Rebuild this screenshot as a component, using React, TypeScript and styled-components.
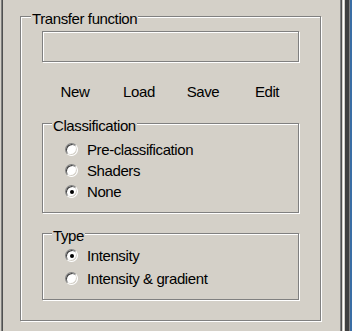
import React from "react";
import styled, { createGlobalStyle } from "styled-components";

const Global = createGlobalStyle`
  html, body { margin: 0; padding: 0; background: #d4d0c8; }
  body { font-family: "Liberation Sans", Arial, sans-serif; }
`;

const Window = styled.div`
  width: 352px;
  height: 331px;
  display: flex;
  background: #d4d0c8;
  overflow: hidden;
  font-family: "Liberation Sans", Arial, sans-serif;
  font-size: 15px;
  letter-spacing: -0.4px;
  color: #000;
`;

const LeftEdge = styled.div`
  width: 3px;
  flex: none;
  background: linear-gradient(to right, #d4d0c8 0 1px, #808080 1px 2px, #505050 2px 3px);
`;

const RightEdge = styled.div`
  width: 12px;
  flex: none;
  background: linear-gradient(
    to right,
    #808080 0 1px,
    #505050 1px 2px,
    #d4d0c8 2px 3px,
    #ffffff 3px 4px,
    #d4d0c8 4px 5px,
    #404040 5px 9px,
    #808080 9px 10px,
    #3a6ea5 10px 12px
  );
`;

const Main = styled.div`
  flex: 1;
  padding: 16px 0 0 17px;
`;

const GroupBox = styled.div<{ $height?: number; $padTop: number; $padX: number }>`
  position: relative;
  box-sizing: border-box;
  border: 1px solid #808080;
  box-shadow: inset 1px 1px 0 #fff, 1px 1px 0 #fff;
  padding-top: ${(p) => p.$padTop}px;
  padding-left: ${(p) => p.$padX}px;
  ${(p) => (p.$height ? `height: ${p.$height}px;` : "")}
`;

const OuterGroup = styled(GroupBox)`
  width: 301px;
  padding-right: 21px;
  padding-bottom: 20px;
`;

const InnerGroup = styled(GroupBox)`
  width: 257px;
  margin-top: 20px;
`;

const Legend = styled.span<{ $left: number }>`
  position: absolute;
  top: -7px;
  left: ${(p) => p.$left}px;
  padding: 0 1px;
  line-height: 17px;
  background: #d4d0c8;
  white-space: nowrap;
`;

const TextField = styled.input`
  display: block;
  box-sizing: border-box;
  width: 257px;
  height: 31px;
  margin: 0;
  padding: 0 4px;
  border: 1px solid #808080;
  box-shadow: inset 1px 1px 0 #fff, 1px 1px 0 #fff;
  background: transparent;
  outline: none;
  font: inherit;
`;

const ButtonRow = styled.div`
  display: grid;
  grid-template-columns: repeat(4, 1fr);
  margin-top: 18px;
  margin-left: 1px;
  height: 23px;
`;

const FlatButton = styled.button`
  background: none;
  border: none;
  padding: 0;
  margin: 0;
  font: inherit;
  letter-spacing: inherit;
  color: #000;
  line-height: 17px;
  cursor: default;
`;

const RadioList = styled.div`
  display: flex;
  flex-direction: column;
`;

const RadioRow = styled.label<{ $h: number }>`
  display: flex;
  align-items: center;
  gap: 9px;
  height: ${(p) => p.$h}px;
  line-height: 17px;
  white-space: nowrap;
`;

const RadioDot = styled.span<{ $checked?: boolean }>`
  position: relative;
  box-sizing: border-box;
  width: 13px;
  height: 13px;
  flex: none;
  border-radius: 50%;
  border: 1px solid;
  border-color: #808080 #ffffff #ffffff #808080;
  box-shadow: inset 1px 1px 0 #404040, inset -1px -1px 0 #d4d0c8;
  background: #fff;
  &::after {
    content: "";
    display: ${(p) => (p.$checked ? "block" : "none")};
    position: absolute;
    left: 3.5px;
    top: 3.5px;
    width: 4px;
    height: 4px;
    border-radius: 50%;
    background: #000;
  }
`;

type RadioProps = { label: string; checked?: boolean; h: number };
const Radio = ({ label, checked, h }: RadioProps) => (
  <RadioRow $h={h}>
    <RadioDot $checked={checked} />
    <span>{label}</span>
  </RadioRow>
);

export default function App() {
  return (
    <>
      <Global />
      <Window>
        <LeftEdge />
        <Main>
          <OuterGroup $padTop={14} $padX={21}>
            <Legend $left={10}>Transfer function</Legend>
            <TextField readOnly value="" />
            <ButtonRow>
              <FlatButton>New</FlatButton>
              <FlatButton>Load</FlatButton>
              <FlatButton>Save</FlatButton>
              <FlatButton>Edit</FlatButton>
            </ButtonRow>
            <InnerGroup $height={90} $padTop={15} $padX={22}>
              <Legend $left={9}>Classification</Legend>
              <RadioList>
                <Radio h={21} label="Pre-classification" />
                <Radio h={21} label="Shaders" />
                <Radio h={21} label="None" checked />
              </RadioList>
            </InnerGroup>
            <InnerGroup $height={67} $padTop={10} $padX={22}>
              <Legend $left={9}>Type</Legend>
              <RadioList>
                <Radio h={23} label="Intensity" checked />
                <Radio h={23} label="Intensity & gradient" />
              </RadioList>
            </InnerGroup>
          </OuterGroup>
        </Main>
        <RightEdge />
      </Window>
    </>
  );
}
